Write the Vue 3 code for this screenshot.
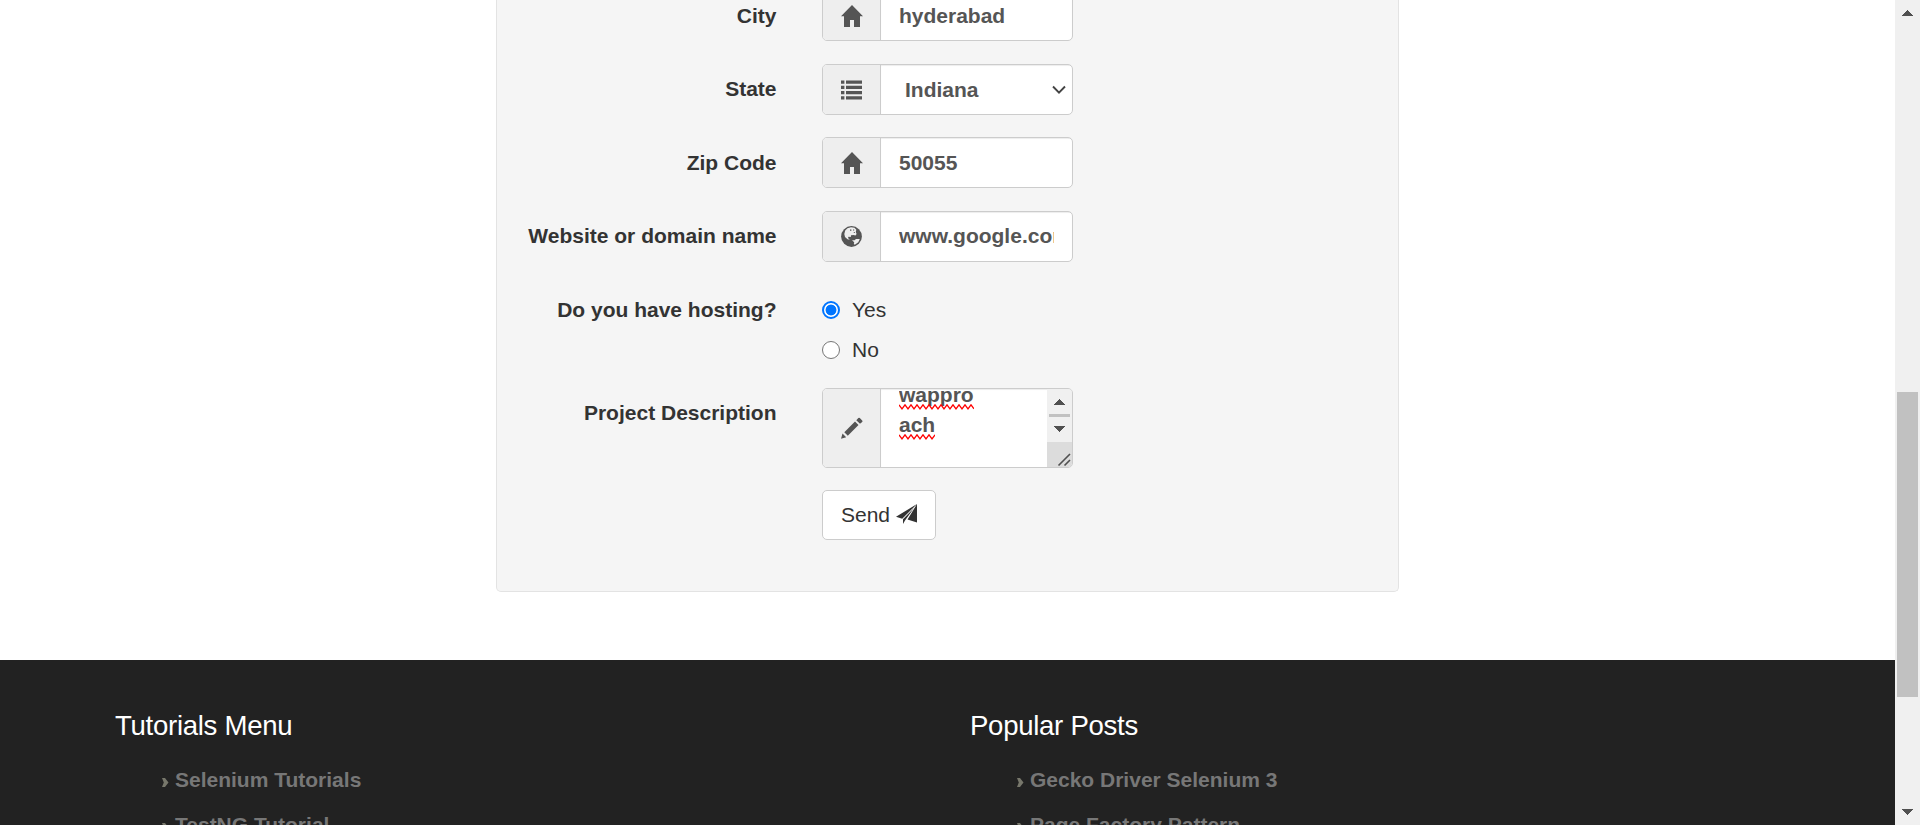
<script setup>
const fields = [
  { label: 'City', icon: 'home', value: 'hyderabad', cls: 'city' },
  { label: 'State', icon: 'list', value: 'Indiana', cls: 'state' },
  { label: 'Zip Code', icon: 'home', value: '50055', cls: 'zip' },
  { label: 'Website or domain name', icon: 'globe', value: 'www.google.com', cls: 'site' },
]
const columns = [
  { title: 'Tutorials Menu', links: ['Selenium Tutorials', 'TestNG Tutorial'] },
  { title: 'Popular Posts', links: ['Gecko Driver Selenium 3', 'Page Factory Pattern'] },
]
</script>

<template>
  <div class="screen">
    <div class="page">
      <main>
        <form class="well">
          <div v-for="f in fields" :key="f.label" class="row" :class="f.cls">
            <label class="label">{{ f.label }}</label>
            <div class="group">
              <span class="addon">
                <svg v-if="f.icon === 'home'" width="22" height="22" viewBox="0 0 22 22"><path d="M11 0 22 11.300H19V22H13V15H9V22H3V11.300H0Z" /></svg>
                <svg v-else-if="f.icon === 'list'" width="21" height="20" viewBox="0 0 21 20"><path d="M0 .5h3.400v3.300H0zM5 .5h16v3.300H5zM0 5.700h3.400V9H0zM5 5.700h16V9H5zM0 11h3.400v3.300H0zM5 11h16v3.300H5zM0 16.300h3.400v3.300H0zM5 16.300h16v3.300H5z" /></svg>
                <svg v-else width="21" height="21" viewBox="0 0 21 21">
                  <circle cx="10.500" cy="10.500" r="10.400" />
                  <path class="land" d="M6.500 2.200 10 1.200 13.500 1.800 15.300 3.800 14.800 6 15.600 8 14.500 9.500 12.500 9 10 9.300 9.800 11 7.500 10.800 7 12 8.800 13.800 6.500 13.300 4 11 3.300 8 4.200 4.500ZM11 14.300 13.500 14.200 15 13 18.800 13 17.300 16.300 13.800 18.800 12.800 18 13.200 16.300Z" />
                  <path d="M9 3.500h1.400v1.200H9zM12 3.500h1.200v1H12zM12.800 6h1v1h-1z" />
                </svg>
              </span>
              <span class="control"><span class="value">{{ f.value }}</span>
                <svg v-if="f.cls === 'state'" class="caret" width="14" height="10" viewBox="0 0 14 10"><path d="M1 1.500 7 7.600 13 1.500" /></svg>
              </span>
            </div>
          </div>

          <div class="row hosting">
            <span class="label">Do you have hosting?</span>
            <div class="radios">
              <label class="radio"><span class="dot on"></span>Yes</label>
              <label class="radio"><span class="dot"></span>No</label>
            </div>
          </div>

          <div class="row desc">
            <label class="label">Project Description</label>
            <div class="group area">
              <span class="addon">
                <svg width="22" height="22" viewBox="0 0 22 22"><path d="M0 21.800 1.500 16.500 5.200 20.200ZM3.300 15.300 14 4.600 17.500 8.100 6.800 18.800ZM15.300 3.200 17.300 1Q18 .3 18.800 1L21.200 3.400Q21.900 4.200 21.200 4.900L19 6.800Z" /></svg>
              </span>
              <span class="control">
                <span class="lines">
                  <span class="word">wappro<svg width="75" height="6"><path d="M0 .8 3 4.800 6 .8 9 4.800 12 .8 15 4.800 18 .8 21 4.800 24 .8 27 4.800 30 .8 33 4.800 36 .8 39 4.800 42 .8 45 4.800 48 .8 51 4.800 54 .8 57 4.800 60 .8 63 4.800 66 .8 69 4.800 72 .8 75 4.800" /></svg></span>
                  <span class="word">ach<svg width="36" height="6"><path d="M0 .8 3 4.800 6 .8 9 4.800 12 .8 15 4.800 18 .8 21 4.800 24 .8 27 4.800 30 .8 33 4.800 36 .8" /></svg></span>
                </span>
                <span class="mini">
                  <svg class="bar" width="25" height="53" shape-rendering="crispEdges"><path d="M7 16 12.500 10 18 16ZM7 37H18L12.500 43Z" /><path class="thumb-mini" d="M2 25h21v3H2z" /></svg>
                  <svg class="grip" width="25" height="25"><path d="M11.500 23.500 23 12M17.500 23.500 23 18" /></svg>
                </span>
              </span>
            </div>
          </div>

          <div class="row send">
            <span class="label"></span>
            <button type="button" class="btn">Send
              <svg width="21" height="20" viewBox="0 0 21 20"><path d="M0 12.800 21 0 6.200 14.800ZM7 20V15.300L18 4 9 16.500ZM21 0V18.500L11.500 15.500Z" /></svg>
            </button>
          </div>
        </form>
      </main>

      <footer>
        <section v-for="c in columns" :key="c.title">
          <h3>{{ c.title }}</h3>
          <ul>
            <li v-for="l in c.links" :key="l">
              <svg width="7" height="9" viewBox="0 0 7 9"><path d="M0 0H3L6.500 4.500 3 9H0L1.800 4.500Z" /></svg>{{ l }}
            </li>
          </ul>
        </section>
      </footer>
    </div>

    <div class="scroll">
      <svg width="11" height="6" shape-rendering="crispEdges"><path d="M0 6 5.500 0 11 6Z" /></svg>
      <div class="thumb"></div>
      <svg width="11" height="6" shape-rendering="crispEdges"><path d="M0 0H11L5.500 6Z" /></svg>
    </div>
  </div>
</template>

<style>
body { margin: 0; overflow: hidden; }
</style>

<style scoped>
* { box-sizing: border-box; }
.screen { display: flex; height: 825px; overflow: hidden; background: #fff; color: #333; font: 21px/30px "Liberation Sans", Arial, sans-serif; }
.page { width: 1895px; height: 825px; overflow: hidden; }
main { height: 660px; overflow: hidden; }
.well { width: 903px; height: 592px; margin-left: 496px; background: #f5f5f5; border: 1px solid #e3e3e3; border-top: 0; border-radius: 0 0 5px 5px; overflow: hidden; }
.row { display: flex; height: 51px; margin-bottom: 22px; }
.city { margin-top: -10px; margin-bottom: 23px; }
.site { margin-bottom: 0; }
.zip { margin-bottom: 23px; }
.label { width: 279.500px; margin-right: 45.500px; padding-top: 10px; text-align: right; font-weight: bold; white-space: nowrap; }
.city .label, .zip .label { padding-top: 11px; }
.group { display: flex; width: 251px; height: 51px; border: 1px solid #ccc; border-radius: 5px; background: #fff; overflow: hidden; }
.addon { width: 58px; flex: none; display: flex; align-items: center; justify-content: center; padding-right: 1px; background: #eee; border-right: 1px solid #ccc; }
.addon svg { fill: #555; }
.city .addon svg, .zip .addon svg { margin-left: 2px; }
.state .addon svg { margin-top: 1px; }
.area .addon svg { margin-left: 1px; margin-top: -1px; }
.land { fill: #eee; }
.control { flex: 1; min-width: 0; display: flex; align-items: center; padding: 0 18px; color: #555; font-weight: bold; box-shadow: inset 0 1px 1px rgba(0, 0, 0, .075); }
.value { flex: 1; overflow: hidden; white-space: nowrap; }
.site .value { margin-top: -1px; }
.state .control { padding: 0 6px 0 24px; }
.caret { fill: none; stroke: #444; stroke-width: 1.900; }
.hosting { height: 81px; margin-top: 33px; margin-bottom: 12px; }
.hosting .label { padding-top: 0; }
.radio { display: flex; align-items: center; height: 30px; margin-bottom: 10px; }
.dot { width: 18px; height: 18px; margin-right: 12px; border: 1.500px solid #767676; border-radius: 50%; background: #fff; }
.dot.on { border: 2px solid #0075ff; background: radial-gradient(circle, #0075ff 5px, #fff 5.800px); }
.desc { height: 80px; }
.area { height: 80px; }
.area .control { padding: 0 0 0 18px; align-items: stretch; }
.lines { flex: 1; display: flex; flex-direction: column; margin-top: 1px; overflow: hidden; }
.word { position: relative; height: 30px; flex: none; line-height: 30px; }
.word:first-child { margin-top: -10px; }
.word svg { position: absolute; left: 0; top: 24px; fill: none; stroke: #f00; stroke-width: 1.300; }
.mini { width: 25px; display: flex; flex-direction: column; background: #dcdcdc; }
.bar { background: #f0f0f0; fill: #505050; flex: none; }
.thumb-mini { fill: #c1c1c1; }
.grip { stroke: #505050; stroke-width: 1.600; fill: none; }
.btn { display: flex; align-items: center; gap: 6px; width: 114px; height: 50px; padding: 0 0 0 18px; border: 1px solid #ccc; border-radius: 5px; background: #fff; color: #333; font: inherit; }
.btn svg { fill: #333; margin-top: -3px; flex: none; }
footer { display: flex; height: 165px; padding-left: 115px; background: #222; overflow: hidden; }
footer section { width: 855px; flex: none; }
h3 { margin: 51px 0 0; font-size: 27.600px; line-height: 30px; font-weight: normal; letter-spacing: -.3px; color: #fff; }
ul { list-style: none; margin: 24px 0 0; padding: 0 0 0 47px; }
li { display: flex; align-items: center; height: 30px; margin-bottom: 15px; color: #777; font-weight: bold; }
li svg { margin: 5px 6px 0 0; fill: #77776b; }
.scroll { width: 25px; height: 825px; padding: 10px 0; display: flex; flex-direction: column; align-items: center; background: #f0f0f0; }
.scroll svg { fill: #505050; flex: none; }
.thumb { width: 21px; height: 305px; margin: 376px 0 auto; background: #c1c1c1; flex: none; }
</style>
